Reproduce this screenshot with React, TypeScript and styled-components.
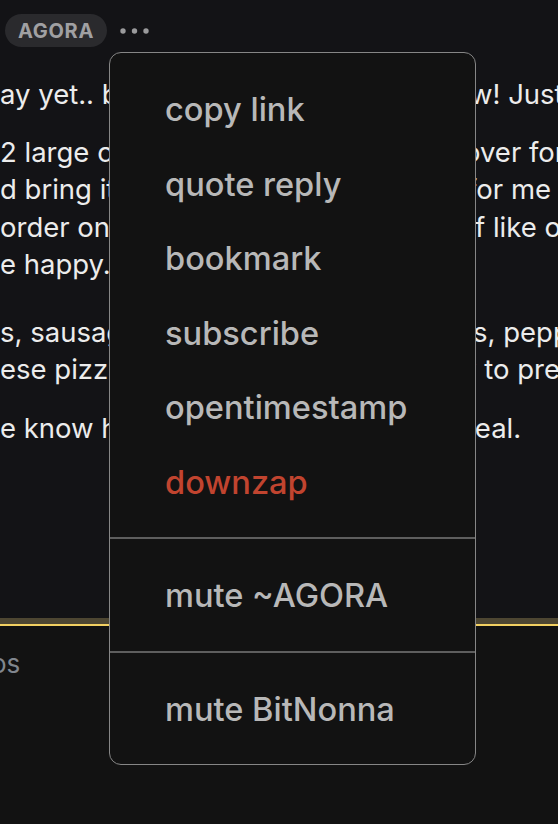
import React from 'react'
import styled, { createGlobalStyle } from 'styled-components'

const GlobalStyle = createGlobalStyle`
    html, body {
        margin: 0;
        padding: 0;
        background: #131316;
        overflow: hidden;
    }
`

const Page = styled.div`
    position: relative;
    width: 558px;
    height: 824px;
    overflow: hidden;
    background: #131316;
    font-family: Inter, 'Noto Sans', sans-serif;
`

const Header = styled.div`
    display: flex;
    align-items: center;
    gap: 13px;
    padding: 14px 0 0 5px;
    height: 33px;
`

const Badge = styled.span`
    display: inline-flex;
    align-items: center;
    height: 33px;
    padding: 0 13px;
    border-radius: 17px;
    background: #2a2a2d;
    color: #a0a0a2;
    font-size: 20px;
    font-weight: 700;
    letter-spacing: 0.7px;
`

const Dots = () => (
    <svg width="30" height="8" viewBox="0 0 30 8">
        <circle cx="3" cy="4" r="2.7" fill="#9a9a9c" />
        <circle cx="14.5" cy="4" r="2.7" fill="#9a9a9c" />
        <circle cx="26" cy="4" r="2.7" fill="#9a9a9c" />
    </svg>
)

const Body = styled.div`
    margin-top: 29px;
    color: #ececec;
    font-size: 27.5px;
    line-height: 37.5px;
`

const Paragraph = styled.div<{ gap?: number }>`
    margin-top: ${p => p.gap ?? 0}px;
`

const Line = styled.div<{ at: number }>`
    display: grid;
    grid-template-columns: ${p => p.at}px max-content;
    white-space: nowrap;
`

const LeftPart = styled.span`
    overflow: hidden;
`

type TextLineProps = {
    left: string
    right?: string
    at?: number
}

const TextLine = ({ left, right = '', at = 558 }: TextLineProps) => (
    <Line at={at}>
        <LeftPart>{left}</LeftPart>
        <span>{right}</span>
    </Line>
)

const Spacer = styled.div`
    height: 171px;
`

const Rule = styled.div`
    height: 6px;
    background: #4d4632;
    border-bottom: 2px solid #f2d062;
`

const Footer = styled.div`
    background: #121212;
    height: 200px;
    padding-top: 20px;
`

const FooterLabel = styled.div`
    margin-left: -9px;
    color: #80868e;
    font-size: 26px;
    line-height: 36px;
`

const Menu = styled.div`
    position: absolute;
    top: 52px;
    left: 109px;
    width: 367px;
    box-sizing: border-box;
    background: #121212;
    border: 1.5px solid #868686;
    border-radius: 12px;
    overflow: hidden;
`

const Section = styled.div`
    padding: 19px 0 18px;

    & + & {
        border-top: 2px solid #5e5e5e;
    }
`

const Item = styled.div<{ danger?: boolean }>`
    display: flex;
    align-items: center;
    height: 74.5px;
    padding-left: 55px;
    font-size: 32.6px;
    font-weight: 500;
    color: ${p => (p.danger ? '#c1442f' : '#b8b8b8')};
`

const App = () => {
    return (
        <Page>
            <GlobalStyle />
            <Header>
                <Badge>AGORA</Badge>
                <Dots />
            </Header>

            <Body>
                <Paragraph>
                    <TextLine left="ay yet.. be the first to claim your pizza no" right="w! Just order" at={470} />
                </Paragraph>
                <Paragraph gap={20}>
                    <TextLine left="2 large cheese pizzas and have them sent " right="over for dinner" at={464} />
                    <TextLine left="d bring it to your door, and a slice " right="for me too" at={467} />
                    <TextLine left="order online or call them yoursel" right="f like old times" at={475} />
                    <TextLine left="e happy." />
                </Paragraph>
                <Paragraph gap={30}>
                    <TextLine left="s, sausage, mushrooms, onions, olive" right="s, peppers" at={473} />
                    <TextLine left="ese pizzas are all ready to go, just tell them the wa" right="y to prepare" at={461} />
                </Paragraph>
                <Paragraph gap={21}>
                    <TextLine left="e know how it goes, it is a really good " right="deal." at={458} />
                </Paragraph>
            </Body>

            <Spacer />
            <Rule />
            <Footer>
                <FooterLabel>os</FooterLabel>
            </Footer>

            <Menu>
                <Section>
                    <Item>copy link</Item>
                    <Item>quote reply</Item>
                    <Item>bookmark</Item>
                    <Item>subscribe</Item>
                    <Item>opentimestamp</Item>
                    <Item danger>downzap</Item>
                </Section>
                <Section>
                    <Item>mute ~AGORA</Item>
                </Section>
                <Section>
                    <Item>mute BitNonna</Item>
                </Section>
            </Menu>
        </Page>
    )
}

export default App
